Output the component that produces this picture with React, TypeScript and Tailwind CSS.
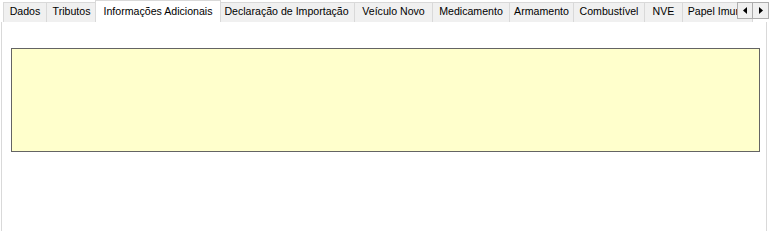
const tabs = [
    { label: "Dados", w: "w-[44px]" },
    { label: "Tributos", w: "w-[50px]" },
    { label: "Informações Adicionais", w: "w-[126px]", active: true },
    { label: "Declaração de Importação", w: "w-[136px]" },
    { label: "Veículo Novo", w: "w-[78px]" },
    { label: "Medicamento", w: "w-[77px]" },
    { label: "Armamento", w: "w-[64px]" },
    { label: "Combustível", w: "w-[71px]" },
    { label: "NVE", w: "w-[38px]" },
    { label: "Papel Imune", w: "w-[70px]" },
];

const App = () => {
    return (
        <div className="w-[769px] h-[231px] bg-white overflow-hidden text-[10.6px] text-black" style={{ fontFamily: '"Liberation Sans", Arial, sans-serif' }}>
            <div className="relative h-[22px] pl-[3px] overflow-hidden">
                <div className="flex items-end h-[22px]">
                    {tabs.map((t) =>
                        t.active ? (
                            <div
                                key={t.label}
                                className={`${t.w} shrink-0 h-[22px] -mx-[2px] relative z-10 bg-white border border-b-0 border-[#d9d9d9] flex items-start justify-center pt-[3px] whitespace-nowrap`}
                            >
                                {t.label}
                            </div>
                        ) : (
                            <div
                                key={t.label}
                                className={`${t.w} shrink-0 h-[20px] bg-[#f0f0f0] border border-b-0 border-l-0 first:border-l border-[#d9d9d9] flex items-center justify-center pb-[1px] whitespace-nowrap overflow-hidden`}
                            >
                                {t.label}
                            </div>
                        )
                    )}
                </div>
                <div className="absolute right-[0px] top-[2px] flex">
                    <div className="w-[16px] h-[17px] bg-[#f0f0f0] border border-[#adadad] flex items-center justify-center">
                        <svg width="4" height="7" viewBox="0 0 4 7"><path d="M4 0 L0 3.5 L4 7 Z" fill="#000" /></svg>
                    </div>
                    <div className="w-[16px] h-[17px] bg-[#f0f0f0] border border-l-0 border-[#adadad] flex items-center justify-center">
                        <svg width="4" height="7" viewBox="0 0 4 7"><path d="M0 0 L4 3.5 L0 7 Z" fill="#000" /></svg>
                    </div>
                </div>
            </div>
            <div className="h-[209px] mx-[1px] w-[766px] border-l border-r border-[#d9d9d9] bg-white pt-[26px] pl-[9px]">
                <div className="w-[749px] h-[104px] bg-[#ffffcc] border border-[#646464]" />
            </div>
        </div>
    );
};

export default App;
